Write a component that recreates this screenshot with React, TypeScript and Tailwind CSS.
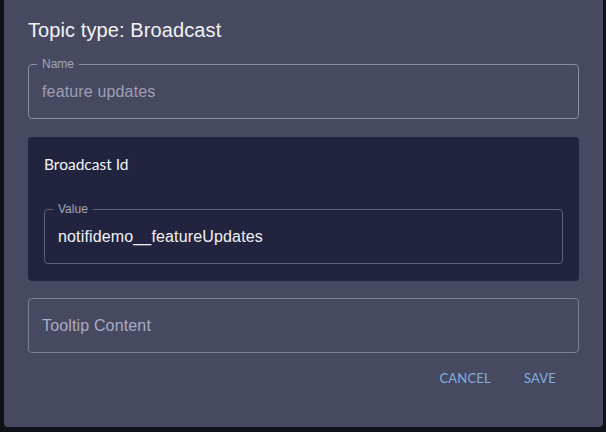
import React from "react";

const sans = "font-[family-name:'Liberation_Sans',Arial,sans-serif]";
const geo = "font-[family-name:'Lato','Noto_Sans',sans-serif]";

function OutlinedField({
  label,
  value,
  placeholder,
  bg,
  border,
  valueClass,
}: {
  label?: string;
  value?: string;
  placeholder?: string;
  bg: string;
  border: string;
  valueClass: string;
}) {
  return (
    <div className={`relative h-[55px] rounded-[4px] border ${border} flex items-center px-[13px]`}>
      {label && (
        <span
          className={`absolute left-[8px] top-[-9px] px-[5px] text-[12px] leading-[16px] text-[#a3a4b6] ${bg} ${sans}`}
        >
          {label}
        </span>
      )}
      <span className={`text-[16px] tracking-[0.15px] ${sans} ${valueClass}`}>{value ?? placeholder}</span>
    </div>
  );
}

export default function App() {
  return (
    <div className="h-[432px] w-[606px] bg-[#0f1018] pl-[4px] pr-[3px] overflow-hidden">
      <div className="h-[427px] bg-[#474960] rounded-b-[4px] px-[24px] pt-[16px]">
        <h2 className={`text-[20px] leading-[28px] tracking-[0.1px] text-[#f2f2f5] ${sans}`}>Topic type: Broadcast</h2>

        <div className="mt-[20px]">
          <OutlinedField
            label="Name"
            value="feature updates"
            bg="bg-[#474960]"
            border="border-[#8c8da0]"
            valueClass="text-[#9d9eb3]"
          />
        </div>

        <div className="mt-[18px] bg-[#22243f] rounded-[4px] px-[16px] pt-[16px] pb-[17px]">
          <div className={`text-[15.5px] leading-[22px] text-[#f4f4f8] ${geo}`}>Broadcast Id</div>
          <div className="mt-[34px]">
            <OutlinedField
              label="Value"
              value="notifidemo__featureUpdates"
              bg="bg-[#22243f]"
              border="border-[#5f6179]"
              valueClass="text-[#f2f2f5]"
            />
          </div>
        </div>

        <div className="mt-[17px]">
          <OutlinedField
            placeholder="Tooltip Content"
            bg="bg-[#474960]"
            border="border-[#7d7f93]"
            valueClass="text-[#a9abc3]"
          />
        </div>

        <div className={`mt-[12px] flex justify-end gap-[33px] pr-[23px] text-[13px] tracking-[0.2px] text-[#7fb0e0] ${geo}`}>
          <button className="py-[4px]">CANCEL</button>
          <button className="py-[4px]">SAVE</button>
        </div>
      </div>
    </div>
  );
}
